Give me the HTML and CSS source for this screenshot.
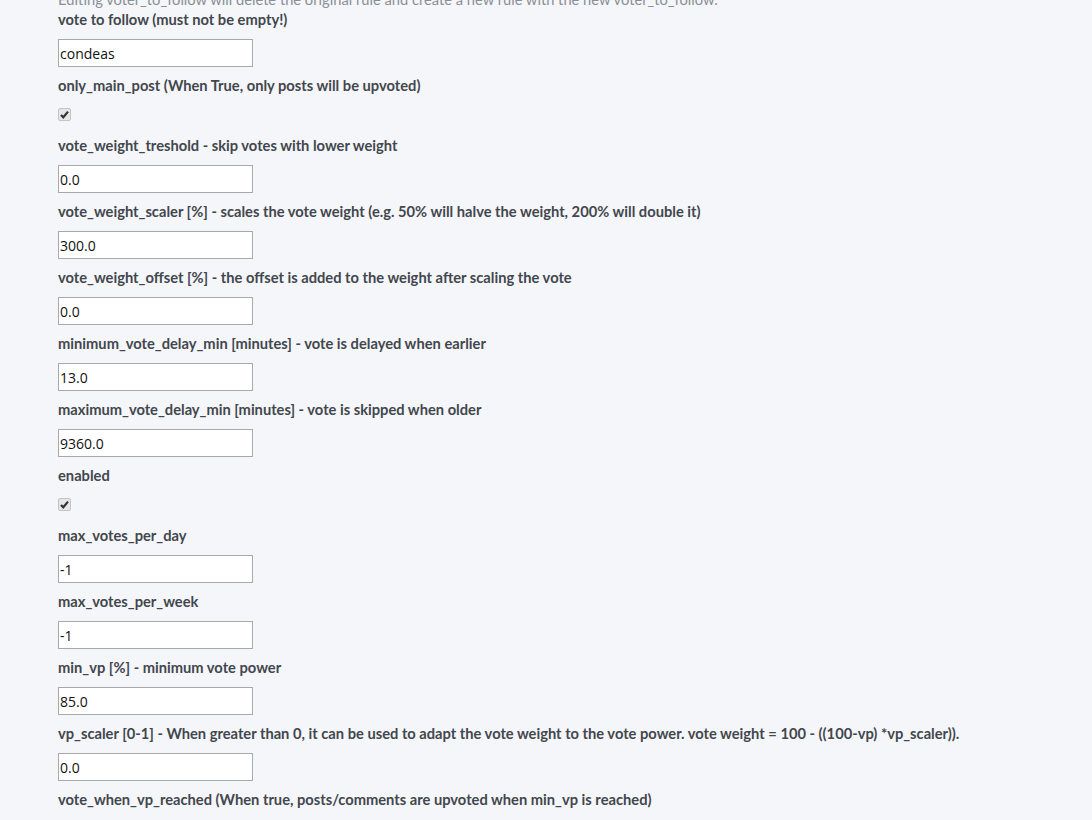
FILE: index.html
```html
<!DOCTYPE html>
<html>
<head>
<meta charset="utf-8">
<link rel="stylesheet" href="styles.css">
</head>
<body>
<div class="form">
  <p class="note">Editing voter_to_follow will delete the original rule and create a new rule with the new voter_to_follow.</p>

  <div class="group"><label class="lbl">vote to follow (must not be empty!)</label><input class="inp" type="text" value="condeas"></div>
  <div class="group check"><label class="lbl">only_main_post (When True, only posts will be upvoted)</label><input class="cb" type="checkbox" checked></div>
  <div class="group"><label class="lbl">vote_weight_treshold - skip votes with lower weight</label><input class="inp" type="text" value="0.0"></div>
  <div class="group"><label class="lbl">vote_weight_scaler [%] - scales the vote weight (e.g. 50% will halve the weight, 200% will double it)</label><input class="inp" type="text" value="300.0"></div>
  <div class="group"><label class="lbl">vote_weight_offset [%] - the offset is added to the weight after scaling the vote</label><input class="inp" type="text" value="0.0"></div>
  <div class="group"><label class="lbl">minimum_vote_delay_min [minutes] - vote is delayed when earlier</label><input class="inp" type="text" value="13.0"></div>
  <div class="group"><label class="lbl">maximum_vote_delay_min [minutes] - vote is skipped when older</label><input class="inp" type="text" value="9360.0"></div>
  <div class="group check"><label class="lbl">enabled</label><input class="cb" type="checkbox" checked></div>
  <div class="group"><label class="lbl">max_votes_per_day</label><input class="inp" type="text" value="-1"></div>
  <div class="group"><label class="lbl">max_votes_per_week</label><input class="inp" type="text" value="-1"></div>
  <div class="group"><label class="lbl">min_vp [%] - minimum vote power</label><input class="inp" type="text" value="85.0"></div>
  <div class="group"><label class="lbl">vp_scaler [0-1] - When greater than 0, it can be used to adapt the vote weight to the vote power. vote weight = 100 - ((100-vp) *vp_scaler)).</label><input class="inp" type="text" value="0.0"></div>
  <div class="group check"><label class="lbl">vote_when_vp_reached (When true, posts/comments are upvoted when min_vp is reached)</label><input class="cb" type="checkbox" checked></div>
</div>
</body>
</html>
```

FILE: styles.css
```css
html, body {
  margin: 0;
  padding: 0;
  background: #f5f6fa;
}

body {
  font-family: Lato, "Open Sans", sans-serif;
  color: #42474d;
  overflow: hidden;
  height: 820px;
}

.form {
  margin-top: -10px;
  padding-left: 58px;
  display: flex;
  flex-direction: column;
}

.note {
  margin: 0;
  font-size: 14.7px;
  line-height: 18px;
  padding-bottom: 2px;
  color: #8a8f96;
  white-space: nowrap;
}

.group {
  display: flex;
  flex-direction: column;
  align-items: flex-start;
  padding-bottom: 9px;
}

.lbl {
  display: block;
  font-size: 14.7px;
  line-height: 18px;
  padding-bottom: 2px;
  font-weight: 700;
  margin-bottom: 9px;
  white-space: nowrap;
}

.inp {
  box-sizing: border-box;
  width: 195px;
  height: 28px;
  margin: 0;
  padding: 0 1px;
  border: 1px solid #a9a9a9;
  background: #fff;
  font-family: "Open Sans", sans-serif;
  font-size: 14px;
  color: #111;
  outline: none;
}

.check .lbl {
  margin-bottom: 12px;
}

.check {
  padding-bottom: 15px;
}

.cb {
  -webkit-appearance: none;
  appearance: none;
  box-sizing: border-box;
  width: 13px;
  height: 13px;
  margin: 0;
  border: 1px solid #c4c4c4;
  border-radius: 2px;
  background-color: #e6e6e6;
  background-image: url("data:image/svg+xml;utf8,<svg xmlns='http://www.w3.org/2000/svg' viewBox='0 0 11 11'><path d='M2 6 L4.3 8.3 L9 2.6' fill='none' stroke='%23333' stroke-width='2.2'/></svg>");
  background-repeat: no-repeat;
  background-position: center;
  background-size: 11px 11px;
}
```
